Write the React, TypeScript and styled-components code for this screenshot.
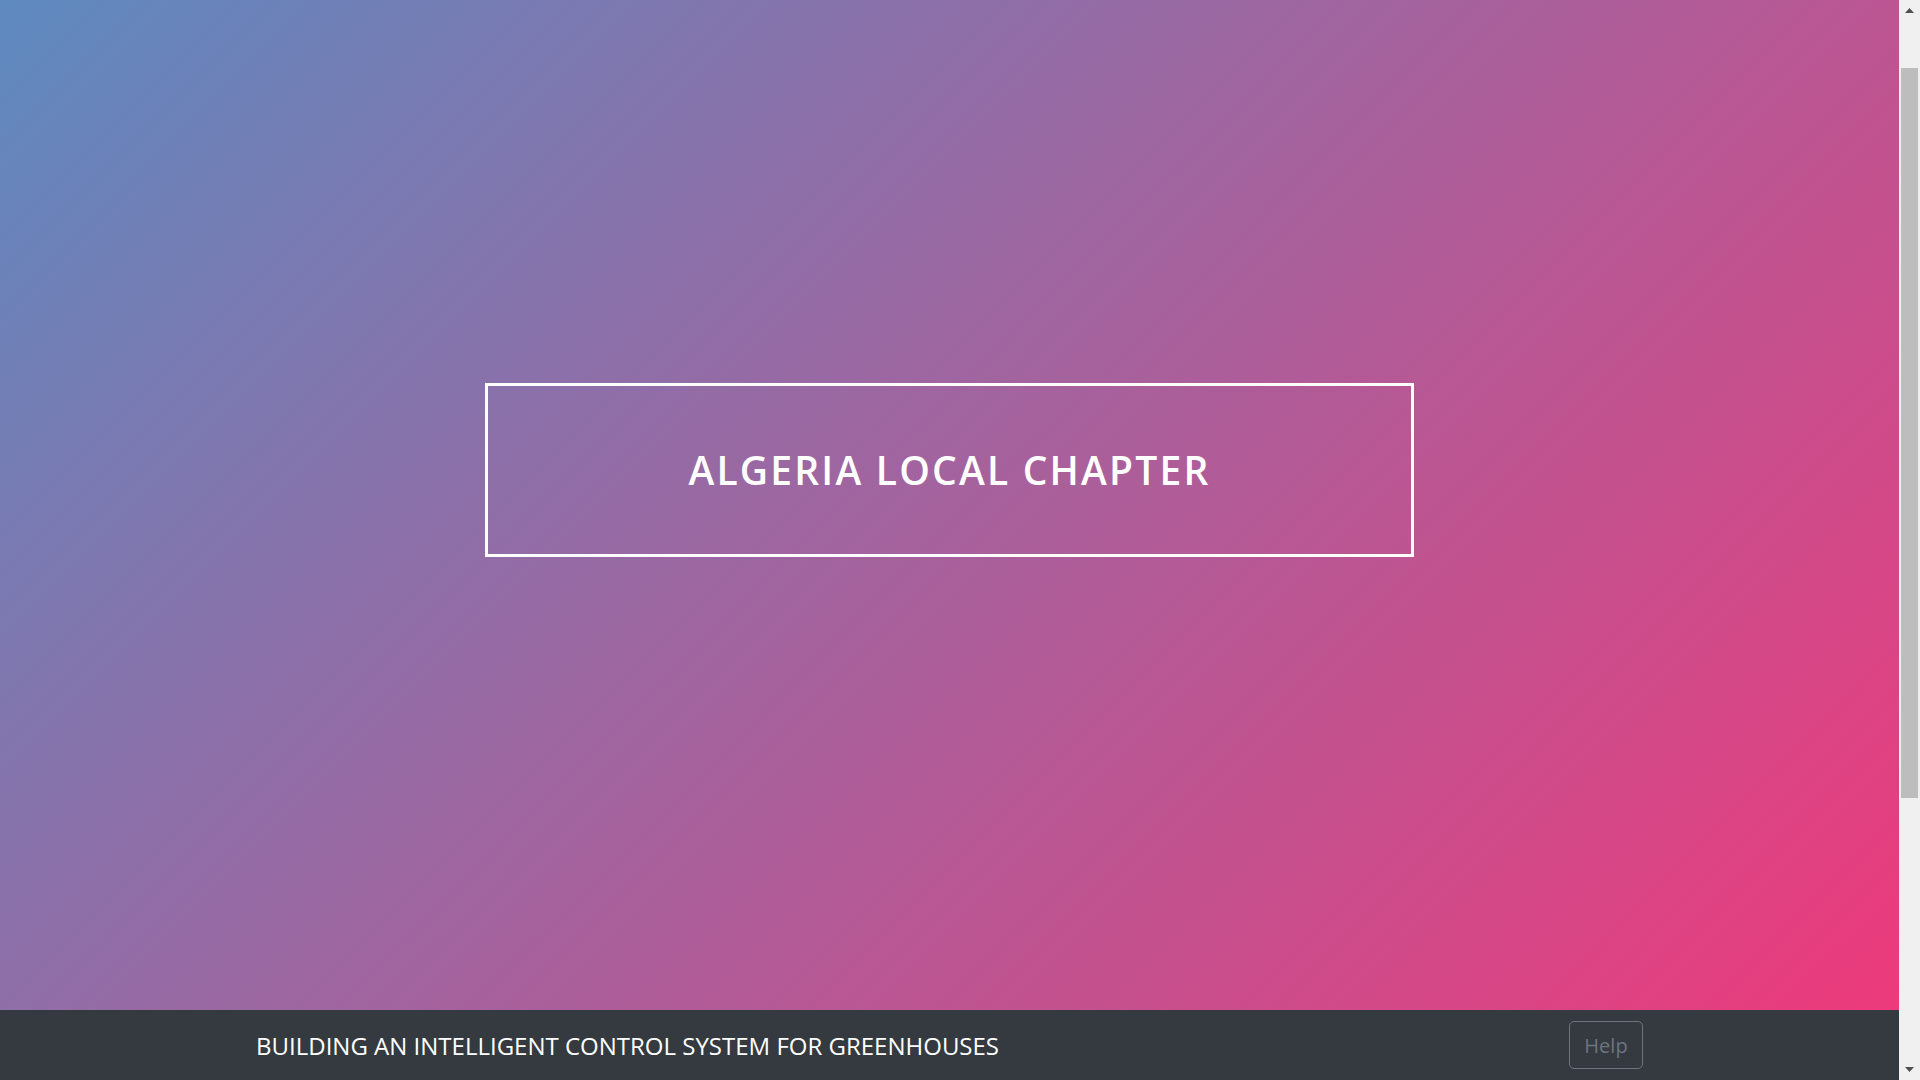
import React, { useLayoutEffect, useEffect } from "react";
import styled, { createGlobalStyle } from "styled-components";

const GlobalStyle = createGlobalStyle`
  html, body {
    margin: 0;
    padding: 0;
  }
  body {
    font-family: "Open Sans", "Liberation Sans", sans-serif;
    background: #343a40;
  }
  * { box-sizing: border-box; }
`;

const Page = styled.div`
  display: flex;
  flex-direction: column;
  padding-right: 21px;
`;

const Hero = styled.section`
  height: 1090px;
  display: flex;
  align-items: center;
  justify-content: center;
  background: linear-gradient(135deg, #5a8cc1 0%, #ed3a7b 100%);
`;

const TitleBox = styled.div`
  width: 929px;
  height: 174px;
  border: 3px solid #ffffff;
  display: flex;
  align-items: center;
  justify-content: center;
`;

const Title = styled.h1`
  margin: 0;
  color: #ffffff;
  font-family: "Open Sans", "Liberation Sans", sans-serif;
  font-weight: 600;
  font-size: 39px;
  letter-spacing: 2.2px;
  text-transform: uppercase;
  line-height: 1.2;
`;

const Filler = styled.section`
  height: 457px;
  background: #343a40;
`;

const BottomBar = styled.nav`
  position: fixed;
  left: 0;
  right: 21px;
  bottom: 0;
  height: 70px;
  background: #343a40;
  display: flex;
  align-items: center;
  justify-content: space-between;
  padding: 0 256px;
`;

const Brand = styled.span`
  color: #ffffff;
  font-family: "Open Sans", "Liberation Sans", sans-serif;
  font-size: 24px;
  font-weight: 400;
  text-transform: uppercase;
`;

const HelpButton = styled.button`
  width: 74px;
  height: 48px;
  padding: 0;
  background: transparent;
  border: 1px solid #6c757d;
  border-radius: 5px;
  color: #6c757d;
  font-family: "Open Sans", "Liberation Sans", sans-serif;
  font-size: 20px;
  cursor: pointer;
`;

const ScrollTrack = styled.div`
  position: fixed;
  top: 0;
  right: 0;
  width: 21px;
  height: 100vh;
  background: #f0f0f0;
  display: flex;
  flex-direction: column;
  align-items: center;
`;

const ArrowCell = styled.div`
  width: 21px;
  height: 21px;
  display: flex;
  align-items: center;
  justify-content: center;
`;

const Thumb = styled.div`
  width: 21px;
  height: 730px;
  margin-top: 47px;
  padding: 0 2px;
  &::before {
    content: "";
    display: block;
    width: 100%;
    height: 100%;
    background: #bdbdbd;
  }
`;

const Spacer = styled.div`
  flex: 1;
`;

function Arrow({ up }: { up: boolean }) {
  return (
    <ArrowCell>
      <svg width="9" height="5" viewBox="0 0 9 5">
        <polygon
          points={up ? "4.5,0 9,5 0,5" : "0,0 9,0 4.5,5"}
          fill="#505050"
        />
      </svg>
    </ArrowCell>
  );
}

export default function App() {
  useLayoutEffect(() => {
    window.scrollTo(0, 75);
  }, []);
  useEffect(() => {
    const t = setTimeout(() => window.scrollTo(0, 75), 0);
    return () => clearTimeout(t);
  }, []);
  return (
    <>
      <GlobalStyle />
      <Page>
        <Hero>
          <TitleBox>
            <Title>Algeria Local Chapter</Title>
          </TitleBox>
        </Hero>
        <Filler />
      </Page>
      <BottomBar>
        <Brand>Building an intelligent control system for greenhouses</Brand>
        <HelpButton>Help</HelpButton>
      </BottomBar>
      <ScrollTrack aria-hidden="true">
        <Arrow up />
        <Thumb />
        <Spacer />
        <Arrow up={false} />
      </ScrollTrack>
    </>
  );
}
